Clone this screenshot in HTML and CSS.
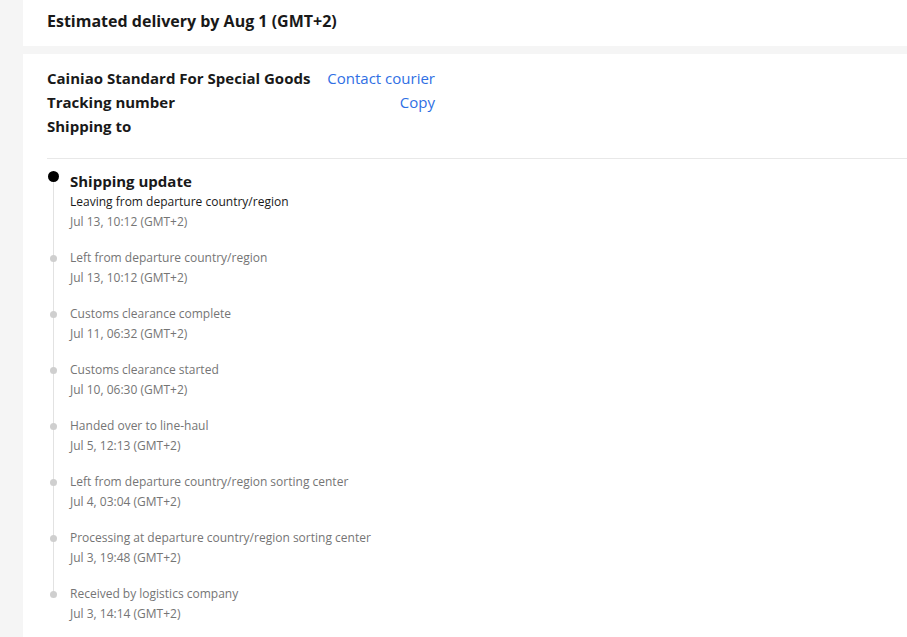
FILE: index.html
```html
<!DOCTYPE html>
<html lang="en">
<head>
<meta charset="utf-8">
<title>Tracking</title>
<link rel="stylesheet" href="styles.css">
</head>
<body>
<div class="page">
  <section class="card head">
    <h1 class="eta">Estimated delivery by Aug 1 (GMT+2)</h1>
  </section>
  <section class="card detail">
    <div class="info">
      <div class="row"><span class="label">Cainiao Standard For Special Goods</span><a class="link">Contact courier</a></div>
      <div class="row"><span class="label">Tracking number</span><a class="link">Copy</a></div>
      <div class="row"><span class="label">Shipping to</span></div>
    </div>
    <ul class="timeline">
      <li class="step current">
        <div class="step-title">Shipping update</div>
        <div class="step-desc">Leaving from departure country/region</div>
        <div class="step-time">Jul 13, 10:12 (GMT+2)</div>
      </li>
      <li class="step">
        <div class="step-desc">Left from departure country/region</div>
        <div class="step-time">Jul 13, 10:12 (GMT+2)</div>
      </li>
      <li class="step">
        <div class="step-desc">Customs clearance complete</div>
        <div class="step-time">Jul 11, 06:32 (GMT+2)</div>
      </li>
      <li class="step">
        <div class="step-desc">Customs clearance started</div>
        <div class="step-time">Jul 10, 06:30 (GMT+2)</div>
      </li>
      <li class="step">
        <div class="step-desc">Handed over to line-haul</div>
        <div class="step-time">Jul 5, 12:13 (GMT+2)</div>
      </li>
      <li class="step">
        <div class="step-desc">Left from departure country/region sorting center</div>
        <div class="step-time">Jul 4, 03:04 (GMT+2)</div>
      </li>
      <li class="step">
        <div class="step-desc">Processing at departure country/region sorting center</div>
        <div class="step-time">Jul 3, 19:48 (GMT+2)</div>
      </li>
      <li class="step">
        <div class="step-desc">Received by logistics company</div>
        <div class="step-time">Jul 3, 14:14 (GMT+2)</div>
      </li>
    </ul>
  </section>
</div>
</body>
</html>
```
FILE: styles.css
```css
html, body {
  margin: 0;
  padding: 0;
  background: #f5f5f5;
  font-family: "Open Sans", "Noto Sans", sans-serif;
  color: #191919;
}
.page {
  margin-left: 23px;
  display: flex;
  flex-direction: column;
  gap: 8px;
  height: 637px;
  overflow: hidden;
}
.card {
  background: #fff;
  flex-shrink: 0;
}
.head {
  height: 46px;
  padding-left: 24px;
  display: flex;
  align-items: center;
}
.eta {
  margin: 0;
  font-size: 16px;
  font-weight: 700;
  line-height: 22px;
  margin-top: -5px;
}
.detail {
  flex: 1 0 auto;
  padding: 12px 0 0 24px;
}
.info {
  display: flex;
  flex-direction: column;
  padding-bottom: 20px;
  border-bottom: 1px solid #e8e8e8;
}
.row {
  display: flex;
  justify-content: space-between;
  width: 388px;
  height: 24px;
  align-items: center;
}
.label {
  font-size: 15px;
  font-weight: 700;
}
.link {
  color: #2f6fe4;
  font-size: 15px;
  cursor: pointer;
}
.timeline {
  list-style: none;
  margin: 0;
  padding: 15px 0 0 0;
}
.step {
  position: relative;
  padding-left: 23px;
  height: 56px;
}
.step::before {
  content: "";
  position: absolute;
  left: 6px;
  top: 0;
  bottom: 0;
  width: 1px;
  background: #e2e2e2;
}
.step:first-child::before {
  top: 10px;
}
.step:last-child::before {
  bottom: auto;
  height: 10px;
}
.step::after {
  content: "";
  position: absolute;
  left: 3px;
  top: 7px;
  width: 7px;
  height: 7px;
  border-radius: 50%;
  background: #cfcfcf;
}
.step.current {
  height: 76px;
}
.step.current::after {
  left: 1px;
  top: -1px;
  width: 11px;
  height: 11px;
  background: #000;
}
.step-title {
  font-size: 15px;
  font-weight: 700;
  line-height: 18px;
  margin-top: -2px;
  margin-bottom: 2px;
}
.step-desc {
  font-size: 12px;
  line-height: 20px;
  color: #757575;
}
.current .step-desc {
  color: #191919;
}
.step-time {
  font-size: 12px;
  line-height: 20px;
  color: #757575;
}
```
